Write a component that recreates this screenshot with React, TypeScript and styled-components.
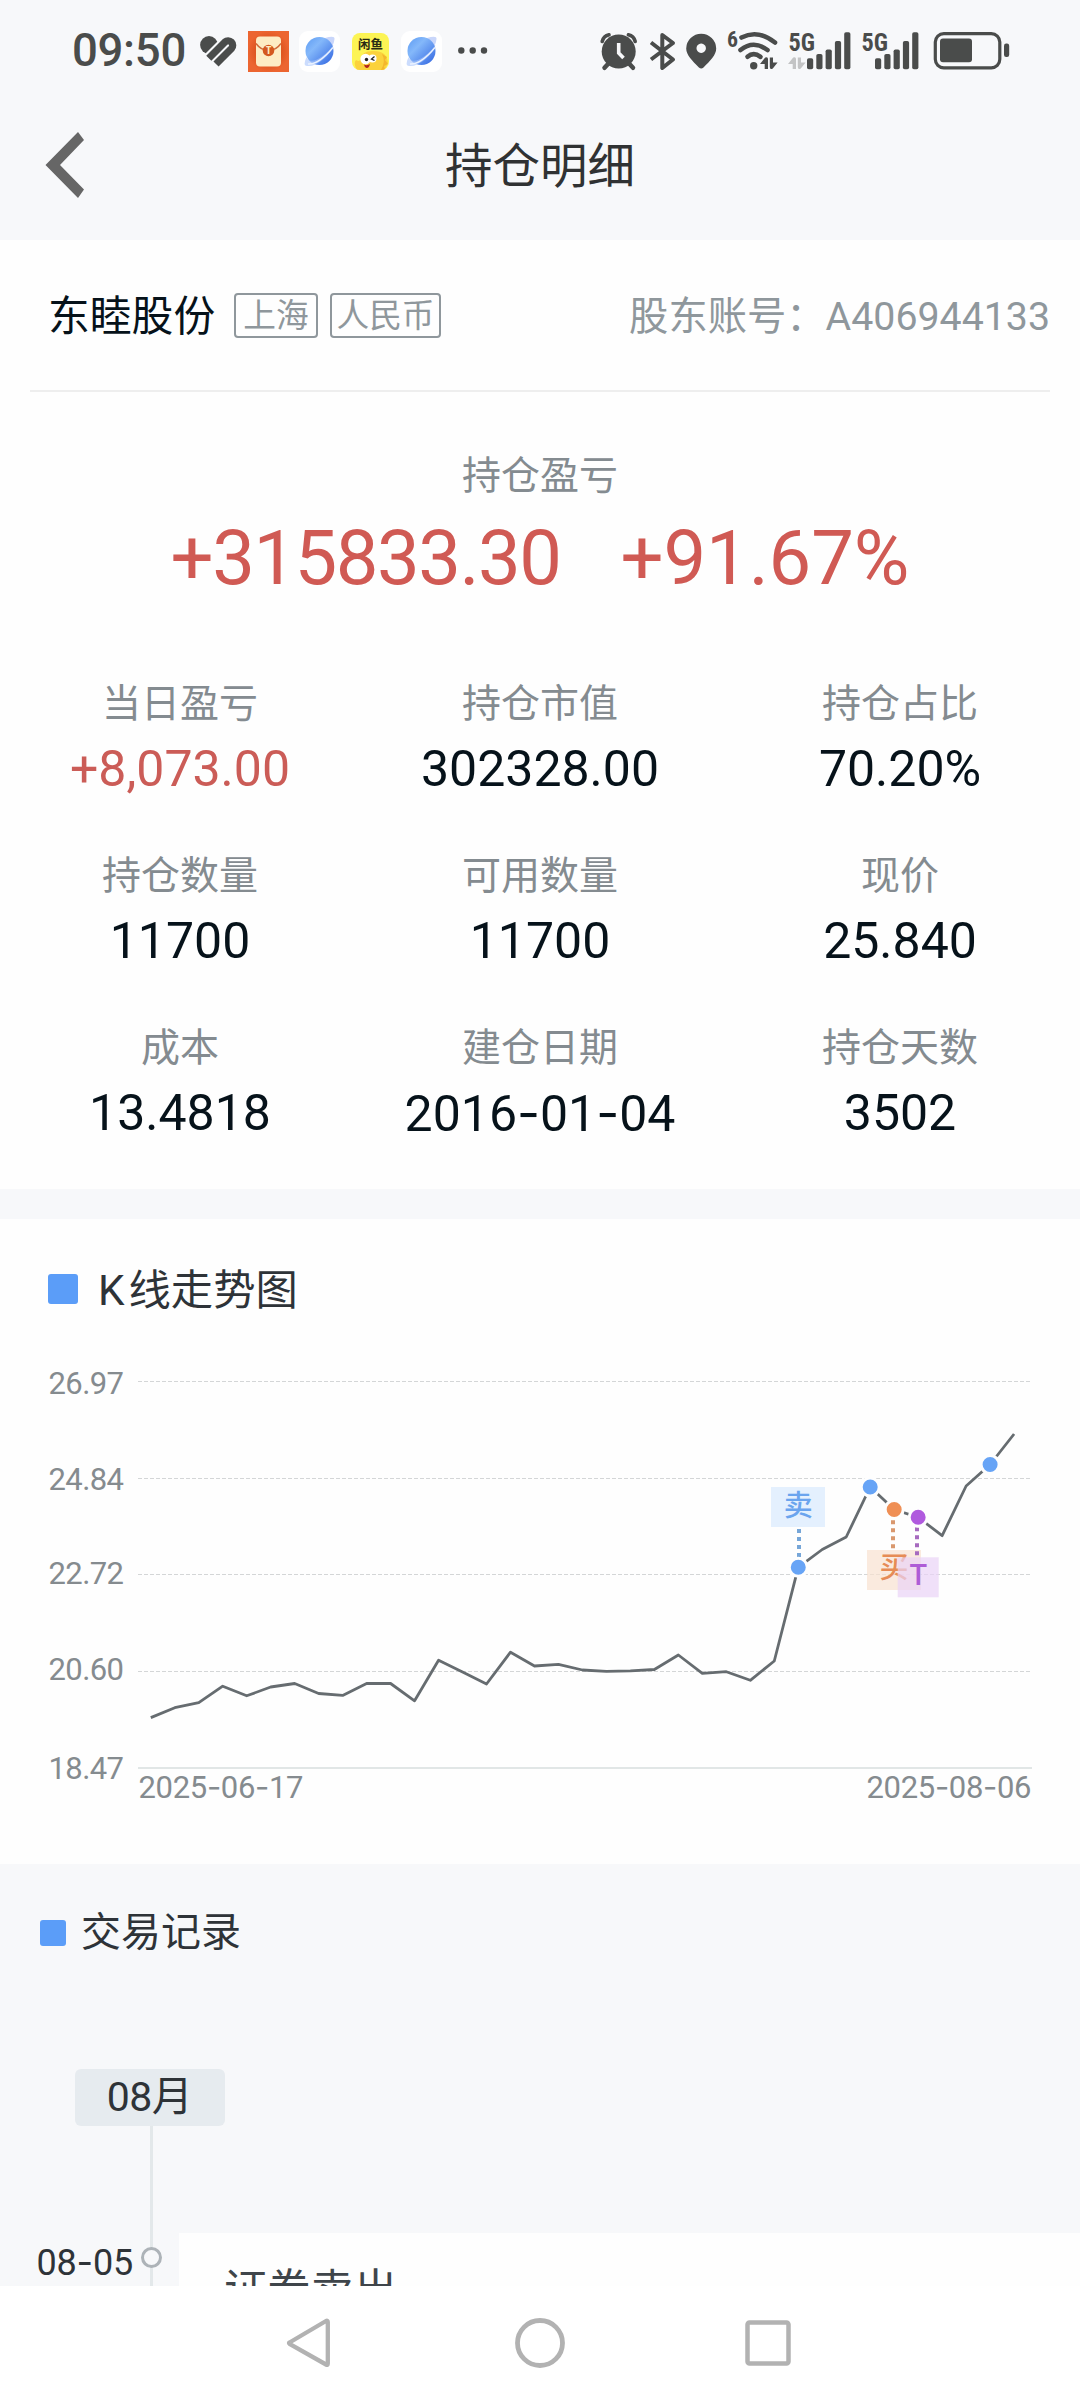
import React from "react";
import styled, { createGlobalStyle } from "styled-components";

const ink = "#4a4c4b";

const GlobalStyle = createGlobalStyle`
  * { box-sizing: border-box; }
  html, body { margin: 0; padding: 0; background: #f7f8fa; }
  body {
    font-family: Roboto, "Noto Sans CJK SC", sans-serif;
    color: #2e3338;
  }
  svg { display: block; overflow: visible; }
`;

const Screen = styled.div`
  width: 1080px;
  height: 2400px;
  display: flex;
  flex-direction: column;
  overflow: hidden;
  background: #f7f8fa;
`;

/* ---------- status bar ---------- */
const StatusBar = styled.header`
  flex: none;
  height: 102px;
  padding: 0 70px 0 72px;
  display: flex;
  align-items: center;
  justify-content: space-between;
`;
const StatusGroup = styled.div`
  display: flex;
  align-items: center;
`;
const Clock = styled.div`
  width: 128px;
  font-size: 45.5px;
  line-height: 60px;
  font-weight: 500;
  letter-spacing: -0.3px;
  color: ${ink};
  white-space: nowrap;
`;
const Slot = styled.div<{ $after?: number }>`
  margin-right: ${(p) => p.$after ?? 0}px;
`;
const GlyphText = styled.text`
  font-family: "Roboto Condensed", Roboto, sans-serif;
  font-weight: 700;
`;

/* ---------- title bar ---------- */
const TitleBar = styled.div`
  flex: none;
  height: 138px;
  padding: 0 45px 12px;
  display: grid;
  grid-template-columns: 80px 1fr 80px;
  align-items: center;
`;
const BackButton = styled.button`
  border: 0;
  padding: 0;
  background: none;
`;
const Title = styled.h1`
  margin: 0;
  padding-top: 3px;
  text-align: center;
  font-size: 47.5px;
  line-height: 64px;
  font-weight: 400;
  color: #303233;
`;

/* ---------- summary ---------- */
const Panel = styled.section<{ $height: number }>`
  flex: none;
  height: ${(p) => p.$height}px;
  background: #fefefe;
`;
const SecurityRow = styled.div`
  height: 152px;
  margin: 0 30px;
  padding-left: 18px;
  border-bottom: 2px solid #eeeeee;
  display: flex;
  align-items: center;
`;
const SecurityName = styled.span`
  width: 186px;
  padding-top: 3px;
  font-size: 41.8px;
  line-height: 60px;
  color: #06121a;
`;
const Tag = styled.span<{ $width: number }>`
  width: ${(p) => p.$width}px;
  height: 45px;
  margin-right: 12px;
  display: flex;
  justify-content: center;
  border: 2px solid #8f979c;
  border-radius: 4px;
  font-size: 32.7px;
  line-height: 43px;
  color: #8f979c;
  white-space: nowrap;
`;
const Account = styled.span`
  margin-left: auto;
  padding-top: 3px;
  font-size: 39.3px;
  line-height: 60px;
  color: #8f979c;
`;
const Hero = styled.div`
  height: 284px;
  padding-top: 56px;
  display: flex;
  flex-direction: column;
  align-items: center;
`;
const Label = styled.div`
  font-size: 39px;
  line-height: 56px;
  color: #848b90;
`;
const HeroFigures = styled.div`
  margin-top: 8px;
  display: flex;
  gap: 60px;
  font-size: 76px;
  line-height: 92px;
  color: #d05a54;
`;
const HeroFigure = styled.span<{ $tracking: number }>`
  letter-spacing: ${(p) => p.$tracking}px;
`;
const MetricGrid = styled.div`
  display: grid;
  grid-template-columns: repeat(3, 360px);
  grid-auto-rows: 172px;
`;
const Metric = styled.div`
  display: flex;
  flex-direction: column;
  align-items: center;
`;
const MetricValue = styled.div<{ $gain?: boolean }>`
  margin-top: 7px;
  font-size: 50px;
  line-height: 60px;
  color: ${(p) => (p.$gain ? "#cb5c57" : "#06121a")};
`;
const Hyphen = styled.span`
  font-family: Inter, sans-serif;
`;

/* ---------- chart ---------- */
const Gap = styled.div`
  flex: none;
  height: 30px;
`;
const SectionTitle = styled.h2<{ $left: number; $gap: number; $size: number }>`
  margin: 0;
  padding-left: ${(p) => p.$left}px;
  display: flex;
  align-items: center;
  gap: ${(p) => p.$gap}px;
  font-size: ${(p) => p.$size}px;
  line-height: 60px;
  font-weight: 400;
  color: #2e3338;
`;
const Marker = styled.span<{ $size: number }>`
  width: ${(p) => p.$size}px;
  height: ${(p) => p.$size}px;
  border-radius: 3px;
  background: #5b9df8;
`;
const ChartTitle = styled.span`
  padding-top: 4px;
`;
const Latin = styled.span`
  margin-right: 4px;
`;
const ChartHead = styled.div`
  height: 121px;
  padding-top: 38px;
`;
const AxisText = styled.text`
  font-size: 31px;
  fill: #858b8f;
`;
const DealText = styled.text`
  font-size: 29px;
  font-weight: 500;
  text-anchor: middle;
`;

/* ---------- records ---------- */
const Records = styled.section`
  flex: 1;
  min-height: 0;
  padding-top: 39px;
  overflow: hidden;
`;
const MonthChip = styled.div`
  width: 150px;
  height: 57px;
  margin: 106px 0 0 75px;
  border-radius: 6px;
  background: #e6ebef;
  font-size: 41px;
  line-height: 56px;
  letter-spacing: -0.6px;
  text-align: center;
  padding-right: 1px;
`;
const Timeline = styled.div`
  display: grid;
  grid-template-columns: 150px 3px 1fr;
  height: 160px;
`;
const DayLabel = styled.div`
  padding: 111px 17px 0 0;
  text-align: right;
  font-size: 36px;
  line-height: 50px;
  letter-spacing: -0.2px;
  white-space: nowrap;
`;
const Rail = styled.div`
  position: relative;
  background: #e3e8ea;
`;
const RailDot = styled.span`
  position: absolute;
  left: -9px;
  top: 121px;
  width: 21px;
  height: 21px;
  border: 3px solid #adb3b8;
  border-radius: 50%;
  background: #f7f8fa;
`;
const RecordCard = styled.div`
  margin: 107px 0 0 26px;
  padding: 28px 0 0 45px;
  background: #fefefe;
  overflow: hidden;
  font-size: 43.3px;
  line-height: 60px;
  color: #3f454a;
`;

/* ---------- navigation ---------- */
const NavBar = styled.nav`
  flex: none;
  height: 114px;
  padding: 0 286px;
  display: flex;
  align-items: center;
  justify-content: space-between;
  background: #ffffff;
`;

/* ---------- icons ---------- */
const HeartIcon = () => (
  <svg width="37" height="42" viewBox="0 0 37 42">
    <defs>
      <clipPath id="lobe">
        <path d="M-2 0H29L-2 31Z" />
      </clipPath>
    </defs>
    <circle cx="9" cy="15" r="8.9" fill={ink} clipPath="url(#lobe)" />
    <path d="M8.8 28.2L25 12A4.6 4.6 0 0 1 31.5 18.5L16 34" fill="none" stroke={ink} strokeWidth="7.2" strokeLinejoin="round" />
  </svg>
);

const EnvelopeIcon = () => (
  <svg width="41" height="42" viewBox="0 0 41 42">
    <defs>
      <radialGradient id="env">
        <stop offset="0.5" stopColor="#d9501c" />
        <stop offset="1" stopColor="#ec6530" />
      </radialGradient>
    </defs>
    <rect y="1" width="41" height="41" fill="url(#env)" />
    <rect x="8" y="6.500" width="25" height="30" rx="4" fill="#fdecc4" />
    <path d="M8 13.500C12 19 16 20.500 20.500 20.500S29 19 33 13.500" fill="none" stroke="#cf6a3a" strokeWidth="1.5" />
    <circle cx="20.5" cy="20.500" r="5.800" fill="#d4581f" />
    <GlyphText x="20.5" y="24.3" fontSize="10.500" textAnchor="middle" fill="#fdecc4">T</GlyphText>
  </svg>
);

const PlanetIcon = ({ id }: { id: string }) => (
  <svg width="41" height="42" viewBox="0 0 41 42">
    <defs>
      <linearGradient id={id} x1="0" y1="0" x2="1" y2="1">
        <stop offset="0" stopColor="#5c9bf3" />
        <stop offset="0.35" stopColor="#84b8fa" />
        <stop offset="1" stopColor="#2f63e0" />
      </linearGradient>
    </defs>
    <rect y="1" width="41" height="41" rx="9" fill="#fff" />
    <path d="M26 8Q36 5 35.500 9Q35 15 30 21Z" fill="#c9d6fa" />
    <circle cx="20.500" cy="21" r="14" fill={`url(#${id})`} />
    <path d="M7.500 27Q3.500 36 8 36Q15 37 24 29.500Q33 22 34.500 15Q27 25 18 29.500Q9.500 33 7.500 27Z" fill="#a9c4fb" opacity="0.6" />
    <path d="M9 34Q20 34.500 34 17.500" fill="none" stroke="#eaf2ff" strokeWidth="1.3" />
  </svg>
);

const XianyuIcon = () => (
  <svg width="37" height="42" viewBox="0 0 37 42">
    <defs>
      <clipPath id="xy"><rect y="3" width="37" height="37" rx="8" /></clipPath>
    </defs>
    <g clipPath="url(#xy)">
      <rect y="3" width="37" height="37" fill="#fcf454" />
      <path d="M5 40Q1 33 4 30Q7 32 8 30Q10 21 20 21Q35 20 36 33L33 40Z" fill="#fbd23c" />
      <path d="M30 24L35 27L33 30L36 34L32 36L33 40H29Q34 31 30 24Z" fill="#f3b72c" />
      <circle cx="13.500" cy="29" r="5.200" fill="#fff" />
      <circle cx="20.500" cy="28.500" r="4" fill="#fff" />
      <circle cx="14.500" cy="29.500" r="1.700" fill="#222" />
      <path d="M22.500 26.500L19.500 29L22.500 30.500" fill="none" stroke="#222" strokeWidth="1.300" />
      <path d="M12 34.500Q15 36 18 34Q17 38.500 14.500 38Q12.500 37.500 12 34.500Z" fill="#b3261e" />
    </g>
    <text x="18.500" y="19" fontSize="12.500" fontWeight="700" textAnchor="middle" fill="#2a2a14">闲鱼</text>
  </svg>
);

const MoreDots = () => (
  <svg width="30" height="42" viewBox="0 0 30 42">
    {[3.3, 14.7, 26].map((x) => (
      <circle key={x} cx={x} cy="20.500" r="3.200" fill={ink} />
    ))}
  </svg>
);

const AlarmIcon = () => (
  <svg width="38" height="42" viewBox="0 0 38 42">
    <circle cx="18.700" cy="21.500" r="17" fill={ink} />
    <path d="M2.200 11.500A9 9 0 0 1 9 4.800M28.400 4.800A9 9 0 0 1 35.200 11.500" fill="none" stroke={ink} strokeWidth="3.600" strokeLinecap="round" />
    <path d="M8 34L4.500 37.800M29.500 34L33 37.800" stroke={ink} strokeWidth="4.500" strokeLinecap="round" />
    <path d="M18.700 13V23L23.500 28" fill="none" stroke="#f7f8fa" strokeWidth="3.600" />
  </svg>
);

const BluetoothIcon = () => (
  <svg width="26" height="42" viewBox="0 0 26 42">
    <path d="M1 12.500L23 29.500L12.300 38V5L23 13L1 29.500" fill="none" stroke={ink} strokeWidth="4" strokeLinejoin="round" />
  </svg>
);

const PinIcon = () => (
  <svg width="31" height="42" viewBox="0 0 31 42">
    <path
      fillRule="evenodd"
      fill={ink}
      d="M15.200 3.800A15 15 0 0 1 30.200 18.500C30.200 25 24 31 17.500 37.500Q15.200 39.300 12.900 37.500C6.500 31 .2 25 .2 18.500A15 15 0 0 1 15.200 3.800ZM15.200 13.500a4.700 4.700 0 1 0 .01 0Z"
    />
  </svg>
);

const DataArrows = ({ x, color }: { x: number; color: string }) => (
  <g transform={`translate(${x} 0)`} fill={color}>
    <path d="M0 34L5.200 27.500Q8 26.500 8 29V39H4.700V34Z" />
    <path d="M9.800 27.500H13V32.500H17.600L12.800 38.500Q9.800 40 9.800 37Z" />
  </g>
);

const WifiIcon = () => (
  <svg width="52" height="42" viewBox="0 0 52 42">
    <GlyphText x="0" y="17" fontSize="22.5" textLength="11" lengthAdjust="spacingAndGlyphs" fill={ink}>6</GlyphText>
    <g fill="none" stroke={ink} strokeWidth="4.600" strokeLinecap="round">
      <path d="M14.500 7.500Q31 -1 48 12.500" />
      <path d="M13.500 20Q26.500 9.500 40.500 20" />
      <path d="M20.500 26.800Q26.500 21.500 33.500 26.800" />
    </g>
    <circle cx="26.700" cy="35.700" r="3.700" fill={ink} />
    <DataArrows x={33} color={ink} />
  </svg>
);

const barTops = [28.3, 24, 19.4, 11, 2.2];
const SignalIcon = ({ idle, width, start }: { idle?: boolean; width: number; start: number }) => (
  <svg width={width} height="42" viewBox={`0 0 ${width} 42`}>
    <GlyphText x="0.5" y="21" fontSize="26.5" textLength="26.500" lengthAdjust="spacingAndGlyphs" fill={ink}>5G</GlyphText>
    {idle && <DataArrows x={0} color="#c3c4c5" />}
    {barTops.map((top, i) => (
      <rect key={top} x={start + i * 9.300} y={top} width="6.200" height={39.300 - top} rx="1.800" fill={ink} />
    ))}
  </svg>
);

const BatteryIcon = () => (
  <svg width="77" height="42" viewBox="0 0 77 42">
    <rect x="2.300" y="3.600" width="64.500" height="34.200" rx="8.500" fill="none" stroke={ink} strokeWidth="3.200" />
    <rect x="7" y="8.500" width="32" height="23.700" rx="3" fill={ink} />
    <rect x="71" y="13.500" width="5.200" height="13.500" rx="2.200" fill={ink} />
  </svg>
);

/* ---------- chart data, in panel pixels ---------- */
const chartTop = 1340;
const closes = [
  1717.6, 1707.7, 1702.7, 1686.2, 1695.8, 1687, 1683.5, 1693.5, 1695.4, 1683.5, 1683.5, 1700.8,
  1660.2, 1672, 1684, 1652.2, 1666, 1664.3, 1670, 1671.3, 1670.8, 1669.5, 1655, 1673.3, 1671.7,
  1680.3, 1661, 1567.3, 1549.5, 1537, 1487, 1509.5, 1517.3, 1535.7, 1486, 1464.5, 1434,
];
const px = (i: number) => 150.8 + i * 23.98;
const py = (y: number) => y - chartTop;
const levels = [
  { text: "26.97", grid: 1381.5, base: 1394 },
  { text: "24.84", grid: 1478.5, base: 1490 },
  { text: "22.72", grid: 1574.5, base: 1584 },
  { text: "20.60", grid: 1671.5, base: 1680 },
  { text: "18.47", grid: 1768, base: 1779 },
];
const dots = [
  { i: 27, color: "#67a4f6" },
  { i: 30, color: "#67a4f6" },
  { i: 31, color: "#ef8f55" },
  { i: 32, color: "#b05ade" },
  { i: 35, color: "#67a4f6" },
];
const deals = [
  { text: "卖", x: 771, y: 1487, w: 54, cx: 798.2, base: 1515.5, lx: 799, l1: 1529, l2: 1557, fill: "#d9eafd", ink: "#6aa4ee", line: "#76a6d8" },
  { text: "买", x: 867, y: 1550, w: 54, cx: 894, base: 1578, lx: 893, l1: 1520.3, l2: 1548.3, fill: "#f8e1d0", ink: "#e68c56", line: "#d9986e" },
  { text: "T", x: 897.7, y: 1557.3, w: 41, cx: 918.3, base: 1585, lx: 917, l1: 1527.3, l2: 1555.3, fill: "#e9d3f7", ink: "#ae5cd6", line: "#a66abf" },
];

const WithHyphens = ({ text }: { text: string }) => (
  <>
    {text.split("-").map((part, i) => (
      <React.Fragment key={i}>
        {i > 0 && <Hyphen>-</Hyphen>}
        {part}
      </React.Fragment>
    ))}
  </>
);

const DateLabel = ({ text, x }: { text: string; x: number }) => (
  <AxisText x={x} y={py(1798)} textLength="165">
    {text.split("-").map((part, i) => (
      <React.Fragment key={i}>
        {i > 0 && <tspan fontFamily="Inter">-</tspan>}
        <tspan>{part}</tspan>
      </React.Fragment>
    ))}
  </AxisText>
);

const TrendChart = () => (
  <svg width="1080" height="500" viewBox="0 0 1080 500">
    {levels.map((l, i) => {
      const last = i === levels.length - 1;
      return (
        <g key={l.text}>
          <AxisText x="48.500" y={py(l.base)} textLength="75.500">{l.text}</AxisText>
          <line
            x1="138"
            x2={last ? 1032 : 1030}
            y1={py(l.grid)}
            y2={py(l.grid)}
            stroke={last ? "#e1e6e6" : "#d4d6d7"}
            strokeWidth={last ? 2 : 1}
            strokeDasharray={last ? undefined : "4 2"}
          />
        </g>
      );
    })}
    <DateLabel text="2025-06-17" x={138.5} />
    <DateLabel text="2025-08-06" x={866.5} />
    <polyline
      points={closes.map((y, i) => `${px(i)},${py(y)}`).join(" ")}
      fill="none"
      stroke="#666c70"
      strokeWidth="2.800"
      strokeLinejoin="round"
    />
    {deals.map((d) => (
      <g key={d.text}>
        <line x1={d.lx} x2={d.lx} y1={py(d.l1)} y2={py(d.l2)} stroke={d.line} strokeWidth="4" strokeDasharray="4 4" />
        <rect x={d.x} y={py(d.y)} width={d.w} height="40" fill={d.fill} fillOpacity="0.7" />
        <DealText x={d.cx} y={py(d.base)} fill={d.ink}>{d.text}</DealText>
      </g>
    ))}
    {dots.map((d) => (
      <circle key={d.i} cx={px(d.i)} cy={py(closes[d.i])} r="9" fill={d.color} stroke="#fefefe" strokeWidth="3" />
    ))}
  </svg>
);

const metrics = [
  { label: "当日盈亏", value: "+8,073.00", gain: true },
  { label: "持仓市值", value: "302328.00" },
  { label: "持仓占比", value: "70.20%" },
  { label: "持仓数量", value: "11700" },
  { label: "可用数量", value: "11700" },
  { label: "现价", value: "25.840" },
  { label: "成本", value: "13.4818" },
  { label: "建仓日期", value: "2016-01-04" },
  { label: "持仓天数", value: "3502" },
];

export default function App() {
  return (
    <Screen>
      <GlobalStyle />
      <StatusBar>
        <StatusGroup>
          <Clock>09:50</Clock>
          <Slot $after={11}><HeartIcon /></Slot>
          <Slot $after={10}><EnvelopeIcon /></Slot>
          <Slot $after={12}><PlanetIcon id="planet-a" /></Slot>
          <Slot $after={12}><XianyuIcon /></Slot>
          <Slot $after={16}><PlanetIcon id="planet-b" /></Slot>
          <MoreDots />
        </StatusGroup>
        <StatusGroup>
          <Slot $after={12}><AlarmIcon /></Slot>
          <Slot $after={10}><BluetoothIcon /></Slot>
          <Slot $after={10}><PinIcon /></Slot>
          <Slot $after={9}><WifiIcon /></Slot>
          <Slot $after={9}><SignalIcon idle width={64} start={19} /></Slot>
          <Slot $after={13}><SignalIcon width={59} start={14} /></Slot>
          <BatteryIcon />
        </StatusGroup>
      </StatusBar>

      <TitleBar>
        <BackButton aria-label="返回">
          <svg width="40" height="66" viewBox="0 0 40 66">
            <path d="M33 0L39 8L15 33L39 57.500L33 66L.5 33Z" fill="#666" />
          </svg>
        </BackButton>
        <Title>持仓明细</Title>
      </TitleBar>

      <Panel $height={949}>
        <SecurityRow>
          <SecurityName>东睦股份</SecurityName>
          <Tag $width={84}>上海</Tag>
          <Tag $width={111}>人民币</Tag>
          <Account>股东账号：A406944133</Account>
        </SecurityRow>
        <Hero>
          <Label>持仓盈亏</Label>
          <HeroFigures>
            <HeroFigure $tracking={-1.5}>+315833.30</HeroFigure>
            <HeroFigure $tracking={-0.1}>+91.67%</HeroFigure>
          </HeroFigures>
        </Hero>
        <MetricGrid>
          {metrics.map((m) => (
            <Metric key={m.label}>
              <Label>{m.label}</Label>
              <MetricValue $gain={m.gain}><WithHyphens text={m.value} /></MetricValue>
            </Metric>
          ))}
        </MetricGrid>
      </Panel>

      <Gap />

      <Panel $height={645}>
        <ChartHead>
          <SectionTitle $left={48} $gap={20} $size={42.3}>
            <Marker $size={30} />
            <ChartTitle><Latin>K</Latin>线走势图</ChartTitle>
          </SectionTitle>
        </ChartHead>
        <TrendChart />
      </Panel>

      <Records>
        <SectionTitle $left={40} $gap={15} $size={40}>
          <Marker $size={26} />
          <span>交易记录</span>
        </SectionTitle>
        <MonthChip>08月</MonthChip>
        <Timeline>
          <DayLabel><WithHyphens text="08-05" /></DayLabel>
          <Rail><RailDot /></Rail>
          <RecordCard>证券卖出</RecordCard>
        </Timeline>
      </Records>

      <NavBar>
        <svg width="46" height="52" viewBox="0 0 46 52">
          <path d="M3.500 25.500L40 4Q41.800 3.200 41.800 5V46.500Q41.800 48.500 40 47.500L3.500 26.800Q2.500 26 3.500 25.500Z" fill="none" stroke="#b2b2b2" strokeWidth="4.300" strokeLinejoin="round" />
        </svg>
        <svg width="50" height="52" viewBox="0 0 50 52">
          <circle cx="25" cy="26" r="22.500" fill="none" stroke="#b2b2b2" strokeWidth="4.800" />
        </svg>
        <svg width="46" height="52" viewBox="0 0 46 52">
          <rect x="-0.5" y="5.5" width="41" height="41" rx="2" fill="none" stroke="#b2b2b2" strokeWidth="4.500" />
        </svg>
      </NavBar>
    </Screen>
  );
}
